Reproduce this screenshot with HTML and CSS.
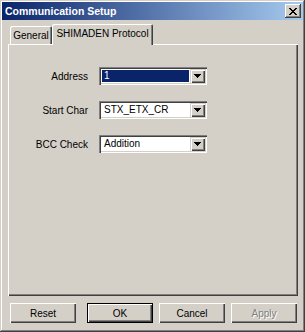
FILE: index.html
```html
<!DOCTYPE html>
<html>
<head>
<meta charset="utf-8">
<link rel="stylesheet" href="styles.css">
</head>
<body>
<div class="window">
  <div class="titlebar">
    <span class="title">Communication Setup</span>
    <div class="close">
      <svg width="8" height="7" viewBox="0 0 8 7" shape-rendering="crispEdges"><path d="M0 0h2v1h-2zM6 0h2v1h-2zM1 1h2v1h-2zM5 1h2v1h-2zM2 2h4v1h-4zM3 3h2v1h-2zM2 4h4v1h-4zM1 5h2v1h-2zM5 5h2v1h-2zM0 6h2v1h-2zM6 6h2v1h-2z" fill="#000"/></svg>
    </div>
  </div>
  <div class="content">
    <div class="tabs">
      <div class="tab">General</div>
      <div class="tab active">SHIMADEN Protocol</div>
    </div>
    <div class="panel">
      <div class="form">
        <div class="label">Address</div>
        <div class="combo"><div class="field"><span class="sel">1</span></div><div class="drop"><svg width="7" height="4" viewBox="0 0 7 4" shape-rendering="crispEdges"><path d="M0 0h7v1h-1v1h-1v1h-1v1h-1v-1h-1v-1h-1v-1h-1z" fill="#000"/></svg></div></div>
        <div class="label">Start Char</div>
        <div class="combo"><div class="field"><span class="txt">STX_ETX_CR</span></div><div class="drop"><svg width="7" height="4" viewBox="0 0 7 4" shape-rendering="crispEdges"><path d="M0 0h7v1h-1v1h-1v1h-1v1h-1v-1h-1v-1h-1v-1h-1z" fill="#000"/></svg></div></div>
        <div class="label">BCC Check</div>
        <div class="combo"><div class="field"><span class="txt">Addition</span></div><div class="drop"><svg width="7" height="4" viewBox="0 0 7 4" shape-rendering="crispEdges"><path d="M0 0h7v1h-1v1h-1v1h-1v1h-1v-1h-1v-1h-1v-1h-1z" fill="#000"/></svg></div></div>
      </div>
    </div>
    <div class="buttons">
      <div class="btn">Reset</div>
      <div class="group">
        <div class="btn default">OK</div>
        <div class="btn">Cancel</div>
        <div class="btn disabled">Apply</div>
      </div>
    </div>
  </div>
</div>
</body>
</html>
```
FILE: styles.css
```css
html, body {
  margin: 0;
  padding: 0;
  background: #d4d0c8;
}
.window {
  box-sizing: border-box;
  width: 305px;
  height: 332px;
  padding: 2px;
  background: #d4d0c8;
  box-shadow: inset -1px -1px #404040, inset 1px 1px #d4d0c8, inset -2px -2px #808080, inset 2px 2px #ffffff;
  font-family: "Liberation Sans", Arial, sans-serif;
  font-size: 10px;
  color: #000;
  display: flex;
  flex-direction: column;
}
.titlebar {
  height: 18px;
  display: flex;
  align-items: center;
  justify-content: space-between;
  padding: 0 2px 0 3px;
  background: linear-gradient(to right, #0a246a, #a6caf0);
}
.title {
  color: #fff;
  font-weight: bold;
  font-size: 10.5px;
  white-space: nowrap;
}
.close {
  box-sizing: border-box;
  width: 16px;
  height: 14px;
  background: #d4d0c8;
  box-shadow: inset -1px -1px #404040, inset 1px 1px #ffffff, inset -2px -2px #808080;
  display: flex;
  align-items: center;
  justify-content: center;
}
.content {
  display: flex;
  flex-direction: column;
  padding: 4px 5px 0 6px;
}
.tabs {
  height: 20px;
  display: flex;
  align-items: flex-end;
  padding-left: 2px;
}
.tab {
  box-sizing: border-box;
  height: 18px;
  padding: 4px 0 0 0;
  text-align: center;
  white-space: nowrap;
  border-top-left-radius: 2px;
  border-top-right-radius: 2px;
  box-shadow: inset 1px 1px #ffffff, inset -1px 0 #404040, inset -2px 0 #808080;
}
.tab:first-child {
  width: 42px;
}
.tab.active {
  position: relative;
  width: 101px;
  height: 21px;
  margin-bottom: -1px;
  padding-top: 4px;
  background: #d4d0c8;
}
.panel {
  box-sizing: border-box;
  height: 252px;
  box-shadow: inset 1px 1px #ffffff, inset -1px -1px #404040, inset -2px -2px #808080;
}
.form {
  display: grid;
  grid-template-columns: 80px 108px;
  grid-auto-rows: 18px;
  column-gap: 11px;
  row-gap: 16px;
  padding-top: 23px;
}
.label {
  text-align: right;
  align-self: center;
  white-space: nowrap;
}
.combo {
  box-sizing: border-box;
  height: 18px;
  padding: 2px;
  background: #fff;
  box-shadow: inset 1px 1px #808080, inset 2px 2px #404040, inset -1px -1px #ffffff, inset -2px -2px #d4d0c8;
  display: flex;
}
.field {
  flex: 1;
  display: flex;
  padding: 1px;
}
.sel {
  flex: 1;
  background: #0a246a;
  color: #fff;
  padding-left: 2px;
  line-height: 12px;
}
.txt {
  padding-left: 2px;
  line-height: 12px;
  white-space: nowrap;
}
.drop {
  box-sizing: border-box;
  width: 15px;
  background: #d4d0c8;
  box-shadow: inset 1px 1px #d4d0c8, inset 2px 2px #ffffff, inset -1px -1px #404040, inset -2px -2px #808080;
  display: flex;
  align-items: center;
  justify-content: center;
}
.buttons {
  margin-top: 7px;
  display: flex;
  justify-content: space-between;
  padding-left: 2px;
  padding-right: 1px;
}
.group {
  display: flex;
  gap: 6px;
}
.btn {
  box-sizing: border-box;
  width: 66px;
  height: 20px;
  display: flex;
  align-items: center;
  justify-content: center;
  box-shadow: inset 1px 1px #ffffff, inset -1px -1px #404040, inset -2px -2px #808080;
}
.btn.default {
  box-shadow: inset 0 0 0 1px #000, inset 2px 2px #ffffff, inset -2px -2px #404040, inset -3px -3px #808080;
}
.btn.disabled {
  color: #808080;
  text-shadow: 1px 1px #ffffff;
}
```
